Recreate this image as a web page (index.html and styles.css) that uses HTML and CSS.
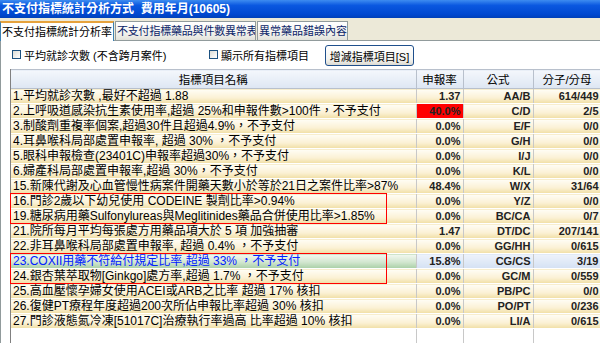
FILE: index.html
```html
<!DOCTYPE html>
<html lang="zh-Hant">
<head>
  <meta charset="UTF-8">
  <title>不支付指標統計分析方式</title>
  <link rel="stylesheet" href="styles.css">
</head>
<body>
  <div class="window">
    <div class="title-bar">不支付指標統計分析方式&nbsp;&nbsp;費用年月(10605)</div>

    <div class="tabs">
      <div class="tab tab-stat active">不支付指標統計分析率</div>
      <div class="tab tab-drug">不支付指標藥品與件數異常表</div>
      <div class="tab tab-err">異常藥品錯誤內容</div>
    </div>

    <div class="panel">
      <div class="toolbar">
        <label class="check check-avg"><span class="box"></span>平均就診次數 (不含跨月案件)</label>
        <label class="check check-all"><span class="box"></span>顯示所有指標項目</label>
        <button class="btn">增減指標項目[S]</button>
      </div>

      <div class="grid-wrap">
        <table class="grid">
          <colgroup>
            <col class="c-name">
            <col class="c-rate">
            <col class="c-formula">
            <col class="c-ratio">
          </colgroup>
          <thead>
            <tr>
              <th>指標項目名稱</th>
              <th>申報率</th>
              <th>公式</th>
              <th>分子/分母</th>
            </tr>
          </thead>
          <tbody>
            <tr><td>1.平均就診次數 ,最好不超過 1.88</td><td class="num">1.37</td><td class="num">AA/B</td><td class="num">614/449</td></tr>
            <tr><td>2.上呼吸道感染抗生素使用率,超過 25%和申報件數&gt;100件，不予支付</td><td class="num alert">40.0%</td><td class="num">C/D</td><td class="num">2/5</td></tr>
            <tr><td>3.制酸劑重複率個案,超過30件且超過4.9%，不予支付</td><td class="num">0.0%</td><td class="num">E/F</td><td class="num">0/0</td></tr>
            <tr><td>4.耳鼻喉科局部處置申報率, 超過 30% ，不予支付</td><td class="num">0.0%</td><td class="num">G/H</td><td class="num">0/0</td></tr>
            <tr><td>5.眼科申報檢查(23401C)申報率超過30%，不予支付</td><td class="num">0.0%</td><td class="num">I/J</td><td class="num">0/0</td></tr>
            <tr><td>6.婦產科局部處置申報率,超過 30%，不予支付</td><td class="num">0.0%</td><td class="num">K/L</td><td class="num">0/0</td></tr>
            <tr><td>15.新陳代謝及心血管慢性病案件開藥天數小於等於21日之案件比率&gt;87%</td><td class="num">48.4%</td><td class="num">W/X</td><td class="num">31/64</td></tr>
            <tr><td>16.門診2歲以下幼兒使用 CODEINE 製劑比率&gt;0.94%</td><td class="num">0.0%</td><td class="num">Y/Z</td><td class="num">0/0</td></tr>
            <tr><td>19.糖尿病用藥Sulfonylureas與Meglitinides藥品合併使用比率&gt;1.85%</td><td class="num">0.0%</td><td class="num">BC/CA</td><td class="num">0/7</td></tr>
            <tr><td>21.院所每月平均每張處方用藥品項大於 5 項 加強抽審</td><td class="num">1.47</td><td class="num">DT/DC</td><td class="num">207/141</td></tr>
            <tr><td>22.非耳鼻喉科局部處置申報率, 超過 0.4% ，不予支付</td><td class="num">0.0%</td><td class="num">GG/HH</td><td class="num">0/615</td></tr>
            <tr class="selected"><td>23.COXII用藥不符給付規定比率,超過 33% ，不予支付</td><td class="num">15.8%</td><td class="num">CG/CS</td><td class="num">3/19</td></tr>
            <tr><td>24.銀杏葉萃取物[Ginkgo]處方率,超過 1.7% ，不予支付</td><td class="num">0.0%</td><td class="num">GC/M</td><td class="num">0/559</td></tr>
            <tr><td>25.高血壓懷孕婦女使用ACEI或ARB之比率 超過 17% 核扣</td><td class="num">0.0%</td><td class="num">PB/PC</td><td class="num">0/0</td></tr>
            <tr><td>26.復健PT療程年度超過200次所佔申報比率超過 30% 核扣</td><td class="num">0.0%</td><td class="num">PO/PT</td><td class="num">0/236</td></tr>
            <tr><td>27.門診液態氮冷凍[51017C]治療執行率過高 比率超過 10% 核扣</td><td class="num">0.0%</td><td class="num">LI/A</td><td class="num">0/615</td></tr>
            <tr class="filler"><td></td><td></td><td></td><td></td></tr>
          </tbody>
        </table>
        <div class="mark mark-a"></div>
        <div class="mark mark-b"></div>
      </div>
    </div>
  </div>
</body>
</html>
```

FILE: styles.css
```css
* {
  box-sizing: border-box;
  margin: 0;
  padding: 0;
}

body {
  width: 600px;
  height: 343px;
  overflow: hidden;
  background: #fff;
  font-family: "Liberation Sans", "Noto Sans CJK TC", sans-serif;
  font-size: 12px;
  color: #000;
}

.window {
  width: 600px;
  height: 343px;
  display: flex;
  flex-direction: column;
}

.title-bar {
  height: 18px;
  line-height: 18px;
  padding-left: 2px;
  background: linear-gradient(#3d8cf0, #0a58e0 30%, #0048d0 80%, #0040b8);
  color: #fff;
  font-weight: bold;
  font-size: 12px;
  white-space: nowrap;
}

.tabs {
  height: 22px;
  display: flex;
  align-items: flex-end;
  background: #ece9d8;
  padding-top: 2px;
}

.tab {
  height: 19px;
  line-height: 18px;
  padding: 0 1px;
  border: 1px solid #919b9c;
  border-bottom: none;
  background: linear-gradient(#fff, #f3f3ef 60%, #e2e2da);
  color: #0a2468;
  font-size: 11px;
  white-space: nowrap;
  overflow: hidden;
  margin-right: 1px;
}

.tab-stat { width: 114px; }
.tab-drug { width: 141px; letter-spacing: -0.2px; }
.tab-err { width: 91px; }

.tab.active {
  height: 20px;
  background: #fff;
  color: #000;
  border-color: #3c7fb1;
  border-top: 2px solid #e6a23c;
  position: relative;
  top: 1px;
}

.panel {
  flex: 1;
  border-left: 1px solid #919b9c;
  border-top: 1px solid #919b9c;
  padding-left: 9px;
  background: #fff;
  display: flex;
  flex-direction: column;
}

.toolbar {
  height: 27px;
  display: flex;
  align-items: center;
  font-size: 11px;
}

.check {
  display: flex;
  align-items: center;
  gap: 3px;
  white-space: nowrap;
}

.check-avg {
  margin-left: 2px;
  width: 197px;
}

.check-all {
  width: 116px;
}

.box {
  width: 9px;
  height: 9px;
  border: 1px solid #1c5180;
  background: linear-gradient(135deg, #dcdcd6, #fff);
}

.btn {
  height: 21px;
  width: 89px;
  margin-top: 2px;
  border: 1px solid #1f4f8c;
  border-radius: 3px;
  background: linear-gradient(#fff, #f4f4f0 70%, #dcdad2);
  font-family: inherit;
  font-size: 11px;
  color: #000;
}

.grid-wrap {
  position: relative;
  flex: 1;
  margin-top: 1px;
  border-left: 1px solid #808080;
}

.grid {
  table-layout: fixed;
  border-collapse: collapse;
  width: 590px;
  height: 100%;
}

.c-name { width: 405px; }
.c-rate { width: 47px; }
.c-formula { width: 70px; }
.c-ratio { width: 68px; }

.grid th {
  height: 19px;
  font-weight: normal;
  font-size: 11.5px;
  background: linear-gradient(#f4f7fc, #dde6f3);
  border-right: 1px solid #b8c0cc;
  border-bottom: 1px solid #b8c0cc;
  border-top: 1px solid #b8c0cc;
}

.grid td {
  height: 15px;
  line-height: 14px;
  padding: 0 2px;
  font-size: 12px;
  white-space: nowrap;
  overflow: hidden;
  background: linear-gradient(#fffdf6, #fbf1d4 60%, #f0dea4);
  border-right: 1px solid #c8c8c8;
  border-bottom: 1px solid #fff;
}

.grid td.num {
  text-align: right;
  font-weight: bold;
  font-size: 11px;
  padding-right: 2px;
  color: #222;
}

.grid td.alert {
  background: #ff0000;
}

.grid tr.selected td {
  background: linear-gradient(#eef3fb, #d4e1f4);
}

.grid tr.selected td:first-child {
  background: linear-gradient(#f2f8f0, #d2e6cf 55%, #a9cfa5);
  color: #0020ff;
}

.grid tr.filler td {
  height: auto;
  background: #fff;
  border-bottom: none;
}

.mark {
  position: absolute;
  left: -1px;
  width: 377px;
  height: 31px;
  border: 1px solid #ff0000;
}

.mark-a { top: 124px; }
.mark-b { top: 184px; }
```
